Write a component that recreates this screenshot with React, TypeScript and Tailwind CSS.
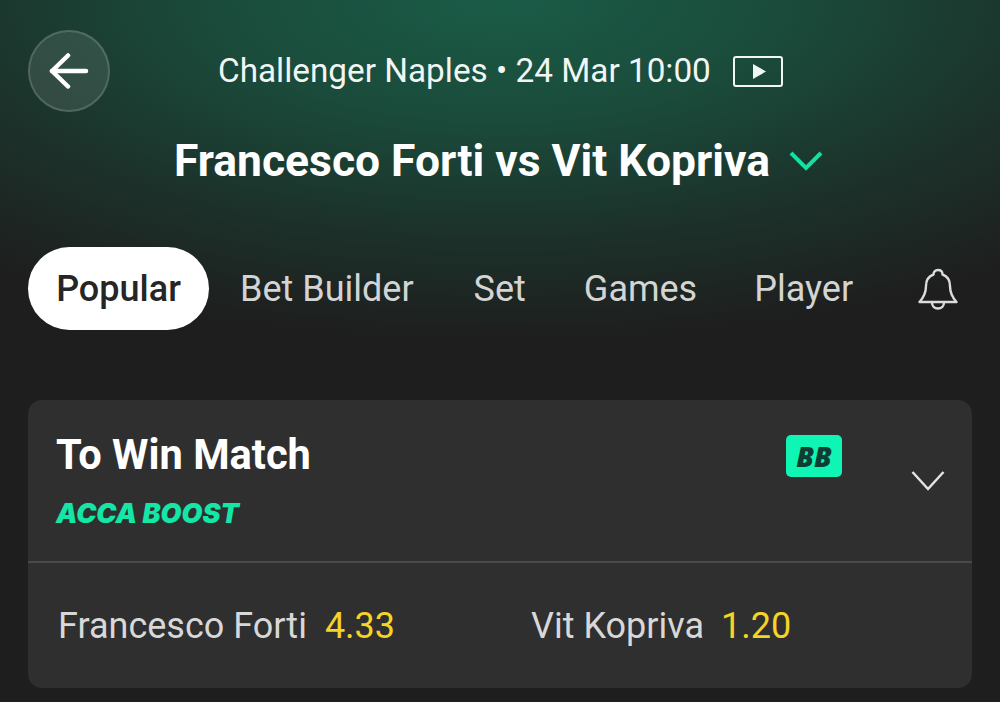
const tabs = [
    {label: "Bet Builder", className: "ml-[31px]"},
    {label: "Set", className: "ml-[60px]"},
    {label: "Games", className: "ml-[58px]"},
    {label: "Player", className: "ml-[57px]"},
];

const BackIcon = () => (
    <svg width="40" height="36" viewBox="0 0 40 36" fill="none" stroke="#ffffff" strokeWidth="4.500" strokeLinecap="round" strokeLinejoin="round">
        <path d="M3 18H37" />
        <path d="M19 2.500L3 18L19 33.500" />
    </svg>
);

const StreamIcon = () => (
    <svg width="50" height="31" viewBox="0 0 50 31" fill="none">
        <rect x="1" y="1" width="48" height="29" rx="2" stroke="#f1f5f3" strokeWidth="2" />
        <path d="M20 8L33 15.500L20 23Z" fill="#f1f5f3" />
    </svg>
);

const BellIcon = () => (
    <svg width="40" height="42" viewBox="0 0 40 42" fill="none" stroke="#dcdcdc" strokeWidth="2.400" strokeLinejoin="round" strokeLinecap="round">
        <path d="M20 2C23 2 24.500 4 24.500 6.500C30 8.500 32 13 32 18C32 25 34 29 38.500 34H1.500C6 29 8 25 8 18C8 13 10 8.500 15.500 6.500C15.500 4 17 2 20 2Z" />
        <path d="M14 34.500C14 38 16.500 40.500 20 40.500C23.500 40.500 26 38 26 34.500" />
    </svg>
);

const App = () => {
    return (
        <div className="w-[1000px] h-[702px] overflow-hidden bg-[#1e1e1e] font-['Roboto',sans-serif]">
            <div className="h-[400px] bg-[radial-gradient(ellipse_820px_340px_at_500px_0px,#1a5c47_0%,#1a4b3b_35%,#1c322a_68%,#1e1e1e_100%)]">
                <div className="flex items-center pl-[28px] pt-[30px]">
                    <button className="flex h-[82px] w-[82px] items-center justify-center rounded-full border-2 border-white/15 bg-white/10">
                        <BackIcon />
                    </button>
                    <div className="ml-[108px] text-[33.300px] leading-[40px] text-[#f1f5f3] whitespace-nowrap">
                        Challenger Naples • 24 Mar 10:00
                    </div>
                    <div className="ml-[22px]">
                        <StreamIcon />
                    </div>
                </div>
                <div className="mt-[19px] flex items-center pl-[174px]">
                    <h1 className="text-[44.400px] leading-[60px] font-bold text-white whitespace-nowrap">
                        Francesco Forti vs Vit Kopriva
                    </h1>
                    <svg className="ml-[19px]" width="34" height="22" viewBox="0 0 34 22" fill="none" stroke="#14e0a4" strokeWidth="4">
                        <path d="M2 3L17 18L32 3" />
                    </svg>
                </div>
                <div className="mt-[56px] flex items-center pl-[28px]">
                    <div className="flex h-[83px] w-[181px] items-center justify-center rounded-full bg-white text-[36px] font-medium text-[#262626]">
                        Popular
                    </div>
                    {tabs.map((tab) => (
                        <div key={tab.label} className={`${tab.className} text-[36px] text-[#d4d4d4] whitespace-nowrap`}>
                            {tab.label}
                        </div>
                    ))}
                    <div className="ml-[65px]">
                        <BellIcon />
                    </div>
                </div>
            </div>

            <div className="mx-[28px] h-[288px] rounded-[14px] bg-[#2f2f2f]">
                <div className="flex h-[163px] border-b-2 border-[#4a4a4a] pl-[28px]">
                    <div>
                        <div className="mt-[30px] text-[41.600px] leading-[50px] font-bold text-white">To Win Match</div>
                        <div className="mt-[18px] font-['Inter',sans-serif] text-[27px] leading-[32px] font-black italic text-[#14e6a8] whitespace-nowrap">
                            ACCA BOOST
                        </div>
                    </div>
                    <div className="ml-auto mt-[35px] flex h-[42px] w-[56px] items-center justify-center rounded-[5px] bg-[#0ff5b4] font-['Open_Sans',sans-serif] text-[28px] font-extrabold italic text-[#0f3d33]">
                        BB
                    </div>
                    <svg className="ml-[69px] mr-[27px] mt-[70px]" width="34" height="22" viewBox="0 0 34 22" fill="none" stroke="#e4e4e4" strokeWidth="2.500">
                        <path d="M1.500 2L17 19L32.500 2" />
                    </svg>
                </div>
                <div className="flex items-center h-[125px] text-[36px]">
                    <div className="ml-[30px] text-[#d8d8d8]">Francesco Forti</div>
                    <div className="ml-[18px] text-[#f5d327]">4.33</div>
                    <div className="ml-[136px] text-[#d8d8d8]">Vit Kopriva</div>
                    <div className="ml-[17px] text-[#f5d327]">1.20</div>
                </div>
            </div>
        </div>
    );
};

export default App;
